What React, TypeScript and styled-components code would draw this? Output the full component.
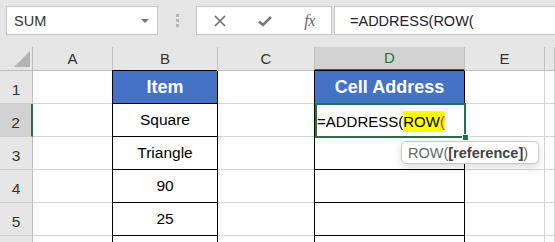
import React from "react";
import styled, { createGlobalStyle } from "styled-components";

const GlobalStyle = createGlobalStyle`
  html, body {
    margin: 0;
    padding: 0;
    background: #fff;
    overflow: hidden;
  }
  body {
    font-family: "Liberation Sans", Arial, sans-serif;
  }
`;

const Window = styled.div`
  width: 555px;
  height: 242px;
  overflow: hidden;
  position: relative;
  background: #fff;
`;

const FormulaBar = styled.div`
  height: 47px;
  box-sizing: border-box;
  background: #e6e6e6;
  display: flex;
  align-items: flex-start;
  padding: 6px 0 0 6px;
`;

const NameBox = styled.div`
  width: 152px;
  height: 29px;
  box-sizing: border-box;
  background: #fff;
  border: 1px solid #c6c6c6;
  display: flex;
  align-items: center;
  justify-content: space-between;
  padding: 0 8px 0 7px;
  font-size: 14.5px;
  color: #333;
`;

const DropArrow = styled.span`
  width: 0;
  height: 0;
  border-left: 4px solid transparent;
  border-right: 4px solid transparent;
  border-top: 4px solid #777;
`;

const Grip = styled.div`
  width: 38px;
  height: 29px;
  display: flex;
  flex-direction: column;
  align-items: center;
  justify-content: center;
  gap: 2px;
`;

const GripDot = styled.span`
  width: 3px;
  height: 3px;
  background: #b6b6b6;
`;

const FxButtons = styled.div`
  width: 136px;
  height: 29px;
  box-sizing: border-box;
  background: #fff;
  border: 1px solid #c6c6c6;
  display: grid;
  grid-template-columns: 45px 45px 45px;
  align-items: center;
  justify-items: center;
`;

const FxText = styled.span`
  font-family: "Liberation Serif", "Times New Roman", serif;
  font-style: italic;
  font-size: 16px;
  color: #666;
  letter-spacing: -0.5px;
`;

const FormulaInput = styled.div`
  flex: 1;
  height: 29px;
  margin-left: 2px;
  box-sizing: border-box;
  background: #fff;
  border: 1px solid #c6c6c6;
  border-right: none;
  display: flex;
  align-items: center;
  padding-left: 15px;
  font-size: 14.5px;
  color: #222;
`;

const Sheet = styled.div`
  display: grid;
  grid-template-columns: 33px 80px 105px 97px 150px 80px 1fr;
  grid-template-rows: 24px repeat(6, 33px);
`;

const Corner = styled.div`
  background: #e6e6e6;
  border-right: 1px solid #bdbdbd;
  border-bottom: 1px solid #bdbdbd;
  position: relative;
  &::after {
    content: "";
    position: absolute;
    right: 2px;
    bottom: 3px;
    width: 0;
    height: 0;
    border-left: 16px solid transparent;
    border-bottom: 16px solid #b4b4b4;
  }
`;

const ColHeader = styled.div<{ $selected?: boolean }>`
  background: ${(p) => (p.$selected ? "#d2d2d2" : "#e6e6e6")};
  border-right: 1px solid #c2c2c2;
  border-bottom: ${(p) => (p.$selected ? "2px solid #217346" : "1px solid #bdbdbd")};
  color: ${(p) => (p.$selected ? "#217346" : "#333")};
  font-size: 15px;
  display: flex;
  align-items: flex-end;
  justify-content: center;
  padding-bottom: 3px;
  box-sizing: border-box;
`;

const RowHeader = styled.div<{ $selected?: boolean }>`
  background: ${(p) => (p.$selected ? "#d2d2d2" : "#e6e6e6")};
  border-right: ${(p) => (p.$selected ? "2px solid #217346" : "1px solid #bdbdbd")};
  border-bottom: 1px solid #cfcfcf;
  color: #333;
  font-size: 15.5px;
  display: flex;
  align-items: flex-end;
  justify-content: center;
  padding-bottom: 4px;
  box-sizing: border-box;
`;

const Cell = styled.div<{ $boxed?: boolean; $head?: boolean }>`
  box-sizing: border-box;
  background: ${(p) => (p.$head ? "#4472c4" : "#fff")};
  border-right: 1px solid ${(p) => (p.$boxed ? "#000" : "#d4d4d4")};
  border-bottom: 1px solid ${(p) => (p.$boxed ? "#000" : "#d4d4d4")};
  box-shadow: ${(p) => (p.$boxed ? "-1px -1px 0 #000" : "none")};
  display: flex;
  align-items: center;
  justify-content: center;
  color: ${(p) => (p.$head ? "#fff" : "#000")};
  font-size: ${(p) => (p.$head ? "18px" : "15.5px")};
  font-weight: ${(p) => (p.$head ? 700 : 400)};
  white-space: nowrap;
`;

const EditCell = styled(Cell)`
  position: relative;
  justify-content: flex-start;
  padding-left: 2px;
  padding-top: 2px;
  font-size: 15px;
  overflow: visible;
  &::before {
    content: "";
    position: absolute;
    left: 0;
    top: -1px;
    right: -2px;
    bottom: -2px;
    border: 2px solid #217346;
    pointer-events: none;
  }
`;

const FillHandle = styled.span`
  position: absolute;
  right: -5px;
  bottom: -5px;
  width: 5px;
  height: 5px;
  background: #217346;
  border: 1px solid #fff;
`;

const Highlight = styled.span`
  background: #ffff00;
  display: inline-block;
  line-height: 21px;
`;

const OpenParen = styled.span`
  color: #e0301e;
`;

const Tooltip = styled.div`
  position: absolute;
  left: 401px;
  top: 141px;
  width: 138px;
  height: 23px;
  box-sizing: border-box;
  background: #fff;
  border: 1px solid #c8c8c8;
  border-radius: 5px;
  box-shadow: 0 3px 8px rgba(0, 0, 0, 0.15);
  display: flex;
  align-items: center;
  padding-left: 6px;
  font-size: 14.5px;
  color: #666;
  white-space: nowrap;
`;

const ArgName = styled.b`
  color: #444;
`;

const COLUMNS = ["A", "B", "C", "D", "E", ""];

type Row = { B: string; D: string; head?: boolean };

const ROWS: Row[] = [
  { B: "Item", D: "Cell Address", head: true },
  { B: "Square", D: "" },
  { B: "Triangle", D: "" },
  { B: "90", D: "" },
  { B: "25", D: "" },
  { B: "", D: "" },
];

// only rows 1-5 show their number; row 6 is cut off by the window
const VISIBLE_ROW_NUMBERS = 5;

function CrossIcon() {
  return (
    <svg width="12" height="12" viewBox="0 0 12 12">
      <path d="M1 1 L11 11 M11 1 L1 11" stroke="#6e6e6e" strokeWidth="1.6" fill="none" />
    </svg>
  );
}

function CheckIcon() {
  return (
    <svg width="14" height="12" viewBox="0 0 14 12">
      <path d="M1 6.5 L5 10 L13 2" stroke="#7a7a7a" strokeWidth="2.6" fill="none" />
    </svg>
  );
}

export default function App() {
  return (
    <Window>
      <GlobalStyle />
      <FormulaBar>
        <NameBox>
          <span>SUM</span>
          <DropArrow />
        </NameBox>
        <Grip>
          <GripDot />
          <GripDot />
          <GripDot />
        </Grip>
        <FxButtons>
          <CrossIcon />
          <CheckIcon />
          <FxText>fx</FxText>
        </FxButtons>
        <FormulaInput>=ADDRESS(ROW(</FormulaInput>
      </FormulaBar>
      <Sheet>
        <Corner />
        {COLUMNS.map((c) => (
          <ColHeader key={c || "F"} $selected={c === "D"}>
            {c}
          </ColHeader>
        ))}
        {ROWS.map((r, i) => (
          <React.Fragment key={i}>
            <RowHeader $selected={i === 1}>
              {i < VISIBLE_ROW_NUMBERS ? i + 1 : ""}
            </RowHeader>
            <Cell />
            <Cell $boxed $head={r.head}>
              {r.B}
            </Cell>
            <Cell />
            {i === 1 ? (
              <EditCell $boxed>
                =ADDRESS(
                <Highlight>
                  ROW<OpenParen>(</OpenParen>
                </Highlight>
                <FillHandle />
              </EditCell>
            ) : (
              <Cell $boxed $head={r.head}>
                {r.D}
              </Cell>
            )}
            <Cell />
            <Cell />
          </React.Fragment>
        ))}
      </Sheet>
      <Tooltip>
        ROW(<ArgName>[reference]</ArgName>)
      </Tooltip>
    </Window>
  );
}
